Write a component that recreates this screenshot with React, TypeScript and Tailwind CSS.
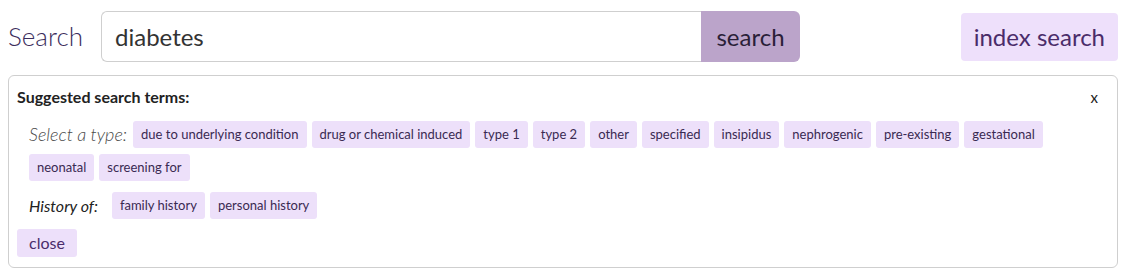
const typeTerms = [
  'due to underlying condition',
  'drug or chemical induced',
  'type 1',
  'type 2',
  'other',
  'specified',
  'insipidus',
  'nephrogenic',
  'pre-existing',
  'gestational',
  'neonatal',
  'screening for',
];

const historyTerms = ['family history', 'personal history'];

const Chip = ({ label }: { label: string }) => (
  <button className="h-[27px] px-2 rounded-[3px] bg-[#ede0fa] text-[13px] text-[#3a2a52] leading-none">
    {label}
  </button>
);

const App = () => {
  return (
    <div className="w-[1128px] h-[277px] bg-white px-2 pt-[11px] font-['Lato',sans-serif]">
      <div className="flex items-center h-[51px]">
        <label className="w-[93px] text-[26px] font-light text-[#3b2d5c]">Search</label>
        <div className="flex">
          <div className="w-[600px] h-[51px] border border-[#cfcfcf] border-r-0 rounded-l-md flex items-center pl-[13px] text-[24px] text-[#333]">
            diabetes
          </div>
          <button className="w-[99px] h-[51px] rounded-r-md bg-[#bba4ca] text-[24px] text-[#2a1f38]">search</button>
        </div>
        <button className="ml-auto mr-[2px] h-[48px] px-[13px] rounded-[4px] bg-[#eee0fb] text-[24px] text-[#4a2c6a]">
          index search
        </button>
      </div>

      <div className="mt-[13px] mr-[2px] h-[193px] border border-[#cfcfcf] rounded-md px-2 pt-[9px] text-[#222]">
        <div className="flex justify-between items-center">
          <div className="text-[16px] font-bold">Suggested search terms:</div>
          <div className="mr-[11px] text-[15px]">x</div>
        </div>

        <div className="mt-[12px] pl-[12px] flex flex-wrap gap-x-[5px] gap-y-[6px] items-center">
          <span className="mr-[1px] text-[18px] italic font-light text-[#4a4a4a]">Select a type:</span>
          {typeTerms.map((t) => (
            <Chip key={t} label={t} />
          ))}
        </div>

        <div className="mt-[11px] pl-[12px] flex gap-[5px] items-center">
          <span className="mr-[9px] text-[16px] italic text-[#222]">History of:</span>
          {historyTerms.map((t) => (
            <Chip key={t} label={t} />
          ))}
        </div>

        <button className="mt-[10px] h-[28px] px-[12px] rounded-[3px] bg-[#ede0fa] text-[16px] text-[#4a2c6a]">
          close
        </button>
      </div>
    </div>
  );
};

export default App;
